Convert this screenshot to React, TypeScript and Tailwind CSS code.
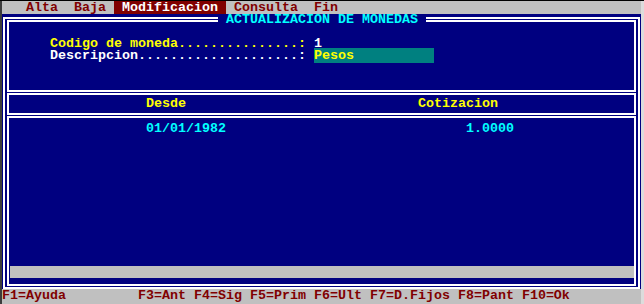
const font = "font-['Liberation_Mono',monospace] font-bold text-[13.33px] leading-[12px]";

export default function App() {
  return (
    <div className={`flex h-[304px] w-[644px] border-t border-black bg-[#dcdcdc] ${font}`}>
      <div className="w-[2px] bg-[#3c3c3c]" />
      <div className="flex w-[639px] flex-col">
        {/* Menu */}
        <div className="flex h-[13px] whitespace-pre bg-[#c0c0c0] text-[#800000]">
          <span className="pt-[1px]">{'   Alta  Baja '}</span>
          <span className="bg-[#800000] pt-[1px] text-white">{' Modificacion '}</span>
          <span className="pt-[1px]">{' Consulta  Fin'}</span>
        </div>

        {/* Pantalla */}
        <div className="h-[275px] bg-[#000080] pt-[3px]">
          <div className="relative ml-[1px] flex h-[272px] w-[637px] flex-col gap-[1px] border-2 border-white px-[2px] py-[1px]">
            <span className="absolute left-[213px] top-[-5px] whitespace-pre bg-[#000080] text-[#00ffff]">
              {' ACTUALIZACION DE MONEDAS '}
            </span>

            {/* Datos de la moneda */}
            <div className="h-[72px] whitespace-pre border-2 border-white pl-[41px] pt-[16px]">
              <div>
                <span className="text-[#ffff00]">Codigo de moneda...............:</span>
                <span className="text-white"> 1</span>
              </div>
              <div className="text-white">
                {'Descripcion....................: '}
                <span className="bg-[#008080] text-[#ffff00]">{'Pesos          '}</span>
              </div>
            </div>

            {/* Encabezado */}
            <div className="h-[22px] whitespace-pre border-2 border-white pl-[137px] pt-[3px] text-[#ffff00]">
              {'Desde                             Cotizacion'}
            </div>

            {/* Cotizaciones */}
            <div className="flex flex-1 flex-col border-2 border-white">
              <div className="whitespace-pre pl-[137px] pt-[5px] text-[#00ffff]">
                {'01/01/1982                              1.0000'}
              </div>
              <div className="mb-[6px] ml-[1px] mt-auto h-[12px] bg-[#c0c0c0]" />
            </div>
          </div>
        </div>

        {/* Teclas */}
        <div className="h-[15px] whitespace-pre bg-[#c0c0c0] pt-[1px] text-[#800000]">
          {'F1=Ayuda         F3=Ant F4=Sig F5=Prim F6=Ult F7=D.Fijos F8=Pant F10=Ok'}
        </div>
      </div>
      <div className="w-[3px]" />
    </div>
  );
}
